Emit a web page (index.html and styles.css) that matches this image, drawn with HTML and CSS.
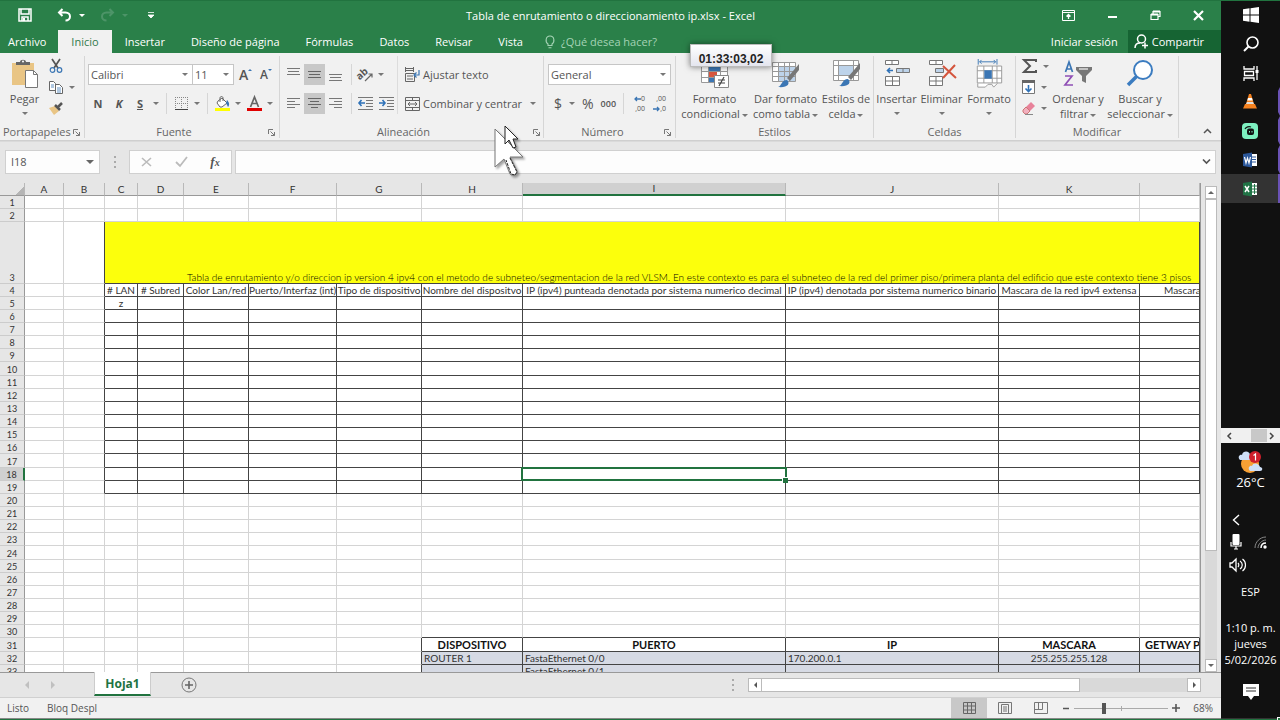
FILE: index.html
```html
<!DOCTYPE html>
<html lang="es">
<head>
<meta charset="utf-8">
<title>Tabla de enrutamiento o direccionamiento ip.xlsx - Excel</title>
<link rel="stylesheet" href="styles.css">
</head>
<body>
<div class="desktop">
<div class="app">
  <header class="titlebar">
    <div class="quick">
      <button aria-label="Guardar"><svg width="14" height="14" viewBox="0 0 14 14"><path d="M1 1h12v12H1z M3 1v5h8V1 M4 13V9h6v4" fill="none" stroke="#fff" stroke-width="1.5"/><path d="M5 10h2v3H5z" fill="#fff"/></svg></button>
      <button class="undo" aria-label="Deshacer"><svg width="15" height="14" viewBox="0 0 15 14"><path d="M5.500 1L2 4.500l3.500 3.500M2 4.500h6.500c6 0 6 8 0 8" fill="none" stroke="#fff" stroke-width="2"/></svg><i class="caret white"></i></button>
      <button class="redo" aria-label="Rehacer"><svg width="15" height="14" viewBox="0 0 15 14"><path d="M9.500 1L13 4.500 9.500 8M13 4.500H6.500c-6 0-6 8 0 8" fill="none" stroke="#4d9468" stroke-width="2"/></svg><i class="caret faded"></i></button>
      <button class="custom" aria-label="Personalizar"><svg width="6" height="6" viewBox="0 0 6 6"><path d="M0 .5h6M0 3h6L3 6z" stroke="#fff" stroke-width=".8" fill="#fff"/></svg></button>
    </div>
    <div class="doc-title">Tabla de enrutamiento o direccionamiento ip.xlsx - Excel</div>
    <div class="win-controls">
      <button aria-label="Opciones de la cinta"><svg width="13" height="11" viewBox="0 0 13 11"><path d="M.5.5h12v10H.5zM.5 2.500h12" fill="none" stroke="#fff"/><path d="M6.500 9V5M4.500 6.500l2-2 2 2" fill="none" stroke="#fff" stroke-width="1.300"/></svg></button>
      <button aria-label="Minimizar"><svg width="11" height="11" viewBox="0 0 11 11"><path d="M1 7h9" stroke="#fff" stroke-width="2"/></svg></button>
      <button aria-label="Restaurar"><svg width="11" height="11" viewBox="0 0 11 11"><path d="M1 4.500h7v5H1zM3 4V1.500h7v5H8" fill="none" stroke="#fff" stroke-width="1.200"/><path d="M1 4.500h7M3 1.500h7" stroke="#fff" stroke-width="2"/></svg></button>
      <button aria-label="Cerrar"><svg width="11" height="11" viewBox="0 0 11 11"><path d="M1 1l9 9M10 1l-9 9" stroke="#fff" stroke-width="2.200"/></svg></button>
    </div>
  </header>

  <nav class="tabs">
    <button class="file">Archivo</button>
    <button class="active">Inicio</button>
    <button>Insertar</button>
    <button>Diseño de página</button>
    <button>Fórmulas</button>
    <button>Datos</button>
    <button>Revisar</button>
    <button>Vista</button>
    <button class="tell"><svg width="10" height="14" viewBox="0 0 10 14"><path d="M3 10.500V9C0 7 .5 1 5 1s5 6 2 8v1.500zM3.500 12.800h3" fill="none" stroke="#a5d3b5" stroke-width="1.100"/></svg>¿Qué desea hacer?</button>
    <span class="grow"></span>
    <button class="signin">Iniciar sesión</button>
    <button class="share"><svg width="15" height="15" viewBox="0 0 15 15"><circle cx="7.500" cy="5" r="4" fill="none" stroke="#fff" stroke-width="1.500"/><path d="M1 14c0-4 3-5 5-5M8 11.500h6M11 8.500v6" fill="none" stroke="#fff" stroke-width="1.500"/></svg>Compartir</button>
  </nav>

  <section class="ribbon">
    <div class="group g-clip">
      <div class="body">
        <button class="big paste"><svg width="28" height="30" viewBox="0 0 28 30"><path d="M1 4h22v22H1z" fill="#e9c585"/><path d="M5 6V3h4c0-3 6-3 6 0h4v3z" fill="#666"/><circle cx="12" cy="2.500" r="1" fill="#fff"/><path d="M14.500 11.500h8l4 4v13h-12z" fill="#fff" stroke="#777"/><path d="M22.500 11.500v4h4" fill="none" stroke="#777"/></svg><span>Pegar</span><i class="caret"></i></button>
        <div class="stack">
          <button aria-label="Cortar"><svg width="14" height="14" viewBox="0 0 14 14"><path d="M3 0l6 9M11 0L5 9" stroke="#555" stroke-width="1.700"/><circle cx="3.500" cy="11" r="2.300" fill="none" stroke="#3b76b4" stroke-width="1.200"/><circle cx="10.500" cy="11" r="2.300" fill="none" stroke="#3b76b4" stroke-width="1.200"/></svg></button>
          <button aria-label="Copiar"><svg width="14" height="13" viewBox="0 0 14 13"><path d="M.5.5h4l2 2v7h-6zM6.500 3.500h4l3 3v6h-7z" fill="#fff" stroke="#666"/><path d="M2 4h3M2 6h3M8 7h4M8 9h4M8 11h4" stroke="#3b76b4" stroke-width=".8"/></svg><i class="caret"></i></button>
          <button aria-label="Copiar formato"><svg width="15" height="13" viewBox="0 0 15 13"><path d="M0 6l6-2 4 5-5 4z" fill="#e9c585"/><path d="M6 3l5 5M9 5l4-4" stroke="#555" stroke-width="2.500"/></svg></button>
        </div>
      </div>
      <footer>Portapapeles<svg class="launch" width="7" height="7" viewBox="0 0 7 7"><path d="M.5 5V.5H5M2.500 2.500l4 4M6.500 3v3.500H3" fill="none" stroke="#777"/></svg></footer>
    </div>

    <div class="group g-font">
      <div class="rows">
        <div class="row">
          <div class="combo c-font"><input aria-label="Fuente" value="Calibri"><i class="caret"></i></div>
          <div class="combo c-size"><input aria-label="Tamaño" value="11"><i class="caret"></i></div>
          <button class="grow-a" aria-label="Aumentar tamaño"><span class="ltr l14">A</span><i class="tip up"></i></button>
          <button class="grow-a" aria-label="Disminuir tamaño"><span class="ltr l12">A</span><i class="tip"></i></button>
        </div>
        <div class="row nks">
          <button class="nb">N</button><button class="ki">K</button><button class="su">S</button><i class="caret"></i>
          <i class="sep"></i>
          <button aria-label="Bordes"><svg width="13" height="13" viewBox="0 0 13 13"><path d="M.5 0v12M6.500 0v12M12.500 0v12M0 .5h13M0 6.500h13" stroke="#888" stroke-dasharray="1 1"/><path d="M0 12.500h13" stroke="#444"/></svg></button><i class="caret"></i>
          <i class="sep"></i>
          <button aria-label="Color de relleno"><svg width="15" height="15" viewBox="0 0 15 15"><path d="M3 5l4-3 5 5-5 4H5L2 7z" fill="#fff" stroke="#666"/><path d="M5 6V2c0-2 3-2 3 0v3" fill="none" stroke="#666"/><path d="M12 4c2 2 3 5 1 7l-2-4z" fill="#3b76b4"/><path d="M0 12h15v3H0z" fill="#ff0"/></svg></button><i class="caret"></i>
          <button aria-label="Color de fuente"><svg width="15" height="15" viewBox="0 0 15 15"><path d="M3.500 11L7.500 1l4 10M5 7.500h5" fill="none" stroke="#666" stroke-width="1.700"/><path d="M0 12h15v3H0z" fill="#e00000"/></svg></button><i class="caret"></i>
        </div>
      </div>
      <footer>Fuente<svg class="launch" width="7" height="7" viewBox="0 0 7 7"><path d="M.5 5V.5H5M2.500 2.500l4 4M6.500 3v3.500H3" fill="none" stroke="#777"/></svg></footer>
    </div>

    <div class="group g-align">
      <div class="align-body">
        <div class="rows left">
          <div class="row">
            <button class="tog" aria-label="Alinear arriba"><svg width="13" height="13" viewBox="0 0 13 13"><path d="M0 .5h13M1 3.500h11M0 6.500h13" stroke="#777"/></svg></button>
            <button class="tog on" aria-label="Alinear en el medio"><svg width="13" height="13" viewBox="0 0 13 13"><path d="M0 3.500h13M1 6.500h11M0 9.500h13" stroke="#666"/></svg></button>
            <button class="tog" aria-label="Alinear abajo"><svg width="13" height="13" viewBox="0 0 13 13"><path d="M0 6.500h13M1 9.500h11M0 12.500h13" stroke="#777"/></svg></button>
            <i class="sep"></i>
            <button class="orient" aria-label="Orientación"><svg width="16" height="14" viewBox="0 0 16 14"><g transform="rotate(-42 6 7)"><text x="-1" y="8" font-size="10" font-weight="700" fill="#555">ab</text></g><path d="M7 13l7-7M10.500 6H14v3.500" fill="none" stroke="#666" stroke-width="1.200"/></svg></button><i class="caret"></i>
          </div>
          <div class="row">
            <button class="tog" aria-label="Alinear a la izquierda"><svg width="13" height="12" viewBox="0 0 13 12"><path d="M0 .5h13M0 3.500h8M0 6.500h13M0 9.500h8" stroke="#777"/></svg></button>
            <button class="tog on" aria-label="Centrar"><svg width="13" height="12" viewBox="0 0 13 12"><path d="M0 .5h13M2 3.500h9M0 6.500h13M3 9.500h7" stroke="#666"/></svg></button>
            <button class="tog" aria-label="Alinear a la derecha"><svg width="13" height="12" viewBox="0 0 13 12"><path d="M0 .5h13M5 3.500h8M0 6.500h13M5 9.500h8" stroke="#777"/></svg></button>
            <i class="sep"></i>
            <button class="tog ind" aria-label="Disminuir sangría"><svg width="15" height="13" viewBox="0 0 15 13"><path d="M0 .5h15M8 3.500h7M8 6.500h7M8 9.500h7M0 12.500h15" stroke="#777"/><path d="M7 6H1M3.500 3L1 6l2.500 3" fill="none" stroke="#2f72b8" stroke-width="1.600"/></svg></button>
            <button class="tog ind" aria-label="Aumentar sangría"><svg width="15" height="13" viewBox="0 0 15 13"><path d="M0 .5h15M8 3.500h7M8 6.500h7M8 9.500h7M0 12.500h15" stroke="#777"/><path d="M0 6h6M3.500 3L6 6 3.500 9" fill="none" stroke="#2f72b8" stroke-width="1.600"/></svg></button>
          </div>
        </div>
        <div class="rows right">
          <div class="row"><button class="lbl"><svg width="15" height="15" viewBox="0 0 15 15"><path d="M.5 0v5M.5 1.500h8M.5 3.500h8M8.500 0v5M.5 6.500h9v8h-9zM2 9h6M2 12h6" fill="none" stroke="#666"/><path d="M14 3v5H9M11.500 5.500L9 8l2.500 2.500" fill="none" stroke="#3b76b4" stroke-width="1.200"/></svg>Ajustar texto</button></div>
          <div class="row"><button class="lbl"><svg width="15" height="14" viewBox="0 0 15 14"><path d="M.5.5h14v13H.5zM.5 3.500h14M.5 10.500h14M7.500 0v3M7.500 11v3M3 7h9M5 5L3 7l2 2M10 5l2 2-2 2" fill="none" stroke="#666"/></svg>Combinar y centrar</button><i class="caret far"></i></div>
        </div>
      </div>
      <footer>Alineación<svg class="launch" width="7" height="7" viewBox="0 0 7 7"><path d="M.5 5V.5H5M2.500 2.500l4 4M6.500 3v3.500H3" fill="none" stroke="#777"/></svg></footer>
    </div>

    <div class="group g-num">
      <div class="rows">
        <div class="row"><div class="combo c-num"><input aria-label="Formato de número" value="General"><i class="caret"></i></div></div>
        <div class="row nums">
          <button class="dollar">$</button><i class="caret"></i><button class="pct">%</button><button class="zeros">000</button>
          <i class="sep"></i>
          <button class="dec more" aria-label="Aumentar decimales"><span><svg width="7" height="6" viewBox="0 0 7 6"><path d="M7 3H1M3 1L1 3l2 2" fill="none" stroke="#3b76b4" stroke-width="1.300"/></svg>0</span><span>,00</span></button>
          <button class="dec" aria-label="Disminuir decimales"><span>,00</span><span><svg width="7" height="6" viewBox="0 0 7 6"><path d="M0 3h6M4 1l2 2-2 2" fill="none" stroke="#3b76b4" stroke-width="1.300"/></svg>,0</span></button>
        </div>
      </div>
      <footer>Número<svg class="launch" width="7" height="7" viewBox="0 0 7 7"><path d="M.5 5V.5H5M2.500 2.500l4 4M6.500 3v3.500H3" fill="none" stroke="#777"/></svg></footer>
    </div>

    <div class="group g-styles">
      <div class="body">
        <button class="big w70"><svg width="30" height="30" viewBox="0 0 30 30"><path d="M1.500 1.500h26v22h-26zM1.500 7.500h26M1.500 12.500h26M1.500 18.500h26M8.500 1.500v22M20.500 1.500v22" fill="#fff" stroke="#999"/><path d="M9 8h11v4H9z" fill="#3b76b4"/><path d="M9 13h8v5H9z" fill="#d9573f"/><path d="M9 19h6v4H9z" fill="#3b76b4"/><path d="M14.500 16.500h14v12h-14z" fill="#fff" stroke="#888"/><path d="M18 21h7M18 24h7M24 18l-5 9" stroke="#444" stroke-width="1.200"/></svg><span>Formato<br>condicional <i class="caret"></i></span></button>
        <button class="big w70"><svg width="30" height="30" viewBox="0 0 30 30"><path d="M1.500 3.500h23v19h-23z" fill="#fff" stroke="#999"/><path d="M8 8h16v14H8z" fill="#bdd3ea"/><path d="M1.500 7.500h23M1.500 12.500h23M1.500 17.500h23M7.500 3.500v19M13.500 3.500v19M18.500 3.500v19" stroke="#999"/><path d="M28 5v6l-9 11-3-3z" fill="#777"/><path d="M7 28c4-1 3-7 9-7 4 4 0 8-9 7z" fill="#3b76b4"/></svg><span>Dar formato<br>como tabla <i class="caret"></i></span></button>
        <button class="big w50"><svg width="30" height="30" viewBox="0 0 30 30"><path d="M2.500 1.500h25v20h-25zM2.500 6.500h25M2.500 16.500h25M7.500 1.500v20M22.500 1.500v20" fill="#fff" stroke="#999"/><path d="M8 7h14v9H8z" fill="#bdd3ea"/><path d="M29 4v6l-9 11-3-3z" fill="#777"/><path d="M8 27c4-1 3-7 9-7 4 4 0 8-9 7z" fill="#3b76b4"/></svg><span>Estilos de<br>celda <i class="caret"></i></span></button>
      </div>
      <footer>Estilos</footer>
    </div>

    <div class="group g-cells">
      <div class="body">
        <button class="big w44"><svg width="28" height="30" viewBox="0 0 28 30"><path d="M2.500 1.500h13v4h-13zM9 1.500v4M2.500 17.500h14v9h-14zM2.500 22h14M9.500 17.500v9" fill="#fff" stroke="#777"/><path d="M13.500 9.500h13v4h-13zM20 9.500v4" fill="#bdd3ea" stroke="#777"/><path d="M10 11.500H4M7 9l-2.500 2.500L7 14" fill="none" stroke="#2f72b8" stroke-width="1.600"/></svg><span>Insertar</span><i class="caret"></i></button>
        <button class="big w44"><svg width="30" height="30" viewBox="0 0 30 30"><path d="M2.500 1.500h13v4h-13zM9 1.500v4M2.500 17.500h13v9h-13zM2.500 22h13M9 17.500v9" fill="#fff" stroke="#777"/><path d="M8.500 9.500h8v4h-8z" fill="#bdd3ea" stroke="#777"/><path d="M16 7l13 12M28 6L16 19" stroke="#d4553d" stroke-width="2"/></svg><span>Eliminar</span><i class="caret"></i></button>
        <button class="big w50"><svg width="30" height="32" viewBox="0 0 30 32"><path d="M3.500 0v6M23.500 0v6M5 3h17M7 1L5 3l2 2M20 1l2 2-2 2" fill="none" stroke="#3b76b4"/><path d="M2.500 7.500h26v18h-26zM2.500 12.500h26M2.500 20.500h26M9.500 7.500v18M18.500 7.500v18M23.500 7.500v18M3 26v4h8l3-3h4l2 3 4-4" fill="#fff" stroke="#999"/><path d="M10 12h8v9h-8z" fill="#3b76b4"/></svg><span>Formato</span><i class="caret"></i></button>
      </div>
      <footer>Celdas</footer>
    </div>

    <div class="group g-edit">
      <div class="body">
        <div class="stack wide">
          <button aria-label="Autosuma"><svg width="15" height="14" viewBox="0 0 15 14"><path d="M14 3V1H2l6 6-6 6h12v-2" fill="none" stroke="#555" stroke-width="2"/></svg><i class="caret"></i></button>
          <button aria-label="Rellenar"><svg width="13" height="14" viewBox="0 0 13 14"><path d="M.5.5h12v13H.5z" fill="#fff" stroke="#777"/><path d="M0 0h13v3H0z" fill="#666"/><path d="M6.500 5v6M3.500 8.500l3 3 3-3" fill="none" stroke="#2f72b8" stroke-width="1.600"/></svg><i class="caret"></i></button>
          <button aria-label="Borrar"><svg width="13" height="13" viewBox="0 0 13 13"><path d="M4 5l5-5 4 4-5 5z" fill="#e8829a"/><path d="M4 5l4 4-3 3H3L1 10V8z" fill="#f2b0bf" stroke="#c77"/><path d="M3 12.500h8" stroke="#888"/></svg><i class="caret"></i></button>
        </div>
        <button class="big w60"><svg width="28" height="30" viewBox="0 0 28 30"><path d="M1.500 13L5 3l3.500 10M3 10h4" fill="none" stroke="#3b76b4" stroke-width="1.700"/><path d="M1 17h7L1 26h8" fill="none" stroke="#8f4fb5" stroke-width="1.700"/><path d="M12 8h16v3l-6 6v7l-4-2v-5l-6-6z" fill="#777"/><path d="M15 10h9" stroke="#ddd" stroke-width="1.500"/></svg><span>Ordenar y<br>filtrar <i class="caret"></i></span></button>
        <button class="big w66"><svg width="28" height="30" viewBox="0 0 28 30"><circle cx="17" cy="11" r="9" fill="#fff" stroke="#3b7cc0" stroke-width="2"/><path d="M10.500 17.500L2 26" stroke="#3b7cc0" stroke-width="3.500"/></svg><span>Buscar y<br>seleccionar <i class="caret"></i></span></button>
      </div>
      <footer>Modificar</footer>
    </div>
    <button class="collapse" aria-label="Contraer la cinta"><svg width="9" height="6" viewBox="0 0 9 6"><path d="M1 5l3.500-3.500L8 5" fill="none" stroke="#555" stroke-width="1.500"/></svg></button>
  </section>

  <section class="formula">
    <div class="combo name"><input aria-label="Cuadro de nombres" value="I18"><i class="caret dd"></i></div>
    <i class="dots"></i>
    <div class="fx-box">
      <button aria-label="Cancelar"><svg width="11" height="10" viewBox="0 0 11 10"><path d="M1 1l9 8M10 1L1 9" stroke="#bbb" stroke-width="1.600"/></svg></button>
      <button aria-label="Introducir"><svg width="13" height="11" viewBox="0 0 13 11"><path d="M1 6l4 4 7-9" fill="none" stroke="#bbb" stroke-width="1.800"/></svg></button>
      <button class="fx" aria-label="Insertar función">f<sub>x</sub></button>
    </div>
    <div class="combo bar"><input aria-label="Barra de fórmulas"><svg width="9" height="7" viewBox="0 0 9 7"><path d="M1 1.500L4.500 5 8 1.500" fill="none" stroke="#555" stroke-width="1.700"/></svg></div>
  </section>

  <main class="sheet">
    <div class="grid-clip">
      <table class="grid">
        <colgroup><col class="k-n"><col class="k-a"><col class="k-b"><col class="k-c"><col class="k-d"><col class="k-e"><col class="k-f"><col class="k-g"><col class="k-h"><col class="k-i"><col class="k-j"><col class="k-k"><col></colgroup>
        <thead><tr><th class="corner"></th><th>A</th><th>B</th><th>C</th><th>D</th><th>E</th><th>F</th><th>G</th><th>H</th><th class="sel">I</th><th>J</th><th>K</th><th></th></tr></thead>
        <tbody id="top"></tbody>
        <tbody id="cells"></tbody>
      </table>
    </div>
    <div class="vscroll"><button aria-label="Subir"><i class="tri up"></i></button><div class="thumb"></div><div class="track"></div><button aria-label="Bajar"><i class="tri"></i></button></div>
  </main>

  <div class="sheetbar">
    <div class="nav"><i class="side l"></i><i class="side r"></i></div>
    <button class="sheet-tab">Hoja1</button>
    <button class="add" aria-label="Hoja nueva"><svg width="16" height="16" viewBox="0 0 16 16"><circle cx="8" cy="8" r="7" fill="none" stroke="#777"/><path d="M4 8h8M8 4v8" stroke="#666" stroke-width="1.600"/></svg></button>
    <span class="grow"></span>
    <i class="dots"></i>
    <div class="hscroll"><button aria-label="Izquierda"><i class="side dark l"></i></button><div class="thumb"></div><div class="track"></div><button aria-label="Derecha"><i class="side dark r"></i></button></div>
  </div>

  <footer class="status">
    <span>Listo</span><span class="lock">Bloq Despl</span><span class="grow"></span>
    <button class="view on" aria-label="Normal"><svg width="13" height="12" viewBox="0 0 13 12"><path d="M.5.5h12v11H.5zM.5 4h12M.5 8h12M4.500.5v11M8.500.5v11" fill="none" stroke="#666"/></svg></button>
    <button class="view" aria-label="Diseño de página"><svg width="14" height="12" viewBox="0 0 14 12"><path d="M.5.5h13v11H.5zM3.500 2.500h7v9h-7zM5 5h4M5 7h4M5 9h4" fill="none" stroke="#777"/></svg></button>
    <button class="view" aria-label="Salto de página"><svg width="14" height="12" viewBox="0 0 14 12"><path d="M.5.5h13v11H.5zM.5 7.500h8v-7M4.500.5v7" fill="none" stroke="#777"/></svg></button>
    <button class="zoom" aria-label="Alejar"><svg width="7" height="7" viewBox="0 0 7 7"><path d="M0 3.500h6" stroke="#555" stroke-width="1.500"/></svg></button>
    <input class="slider" type="range" min="0" max="100" value="31" aria-label="Zoom">
    <button class="zoom" aria-label="Acercar"><svg width="8" height="8" viewBox="0 0 8 8"><path d="M0 4h8M4 0v8" stroke="#555" stroke-width="1.600"/></svg></button>
    <span class="percent">68%</span>
  </footer>
</div>

<aside class="taskbar">
  <button aria-label="Inicio"><svg width="16" height="16" viewBox="0 0 16 16"><path d="M0 2.300l6.500-1v6.200H0zM7.500 1.200L16 0v7.500H7.500zM0 8.500h6.500v6.200l-6.500-1zM7.500 8.500H16V16l-8.500-1.200z" fill="#fff"/></svg></button>
  <button aria-label="Buscar"><svg width="16" height="16" viewBox="0 0 16 16"><circle cx="9.500" cy="6.500" r="5.500" fill="none" stroke="#fff" stroke-width="1.600"/><path d="M5.500 10.500L1 15" stroke="#fff" stroke-width="2"/></svg></button>
  <button aria-label="Vista de tareas"><svg width="16" height="16" viewBox="0 0 16 16"><path d="M1 1v3h10V1M1.500 6.500h9v4h-9zM1 16v-3h10v3M14 1v14" fill="none" stroke="#fff" stroke-width="1.300"/><path d="M12.500 5h3v3h-3z" fill="#fff"/></svg></button>
  <button class="open" aria-label="VLC"><svg width="14" height="15" viewBox="0 0 14 15"><path d="M6 0h2l3 10H3z" fill="#f58220"/><path d="M5 4h4l.7 2.500H4.300z" fill="#fff"/><path d="M2 10h10l2 4.500H0z" fill="#f58220"/><path d="M3 10h8l-1-2H4z" fill="#ddd"/></svg></button>
  <button class="open" aria-label="Grabadora"><svg width="16" height="16" viewBox="0 0 16 16"><rect width="16" height="16" rx="4" fill="#7df0c0"/><path d="M3 6c1-2 4-3 6-2" fill="none" stroke="#111" stroke-width="1.200"/><rect x="5" y="5.500" width="7" height="6.500" rx="2" fill="#111"/><path d="M7.500 8v1.500M10 8v1.500" stroke="#7df0c0"/></svg></button>
  <button class="open" aria-label="Word"><svg width="16" height="16" viewBox="0 0 16 16"><path d="M8 2h7v12H8z" fill="#fff"/><path d="M10 5h4M10 7.500h4M10 10h4" stroke="#2b579a"/><path d="M1 2l9-1.500v15L1 14z" fill="#2b579a"/><path d="M2.500 5L4 11l1.500-5L7 11l1.500-6" fill="none" stroke="#fff" stroke-width="1.200"/></svg></button>
  <button class="open current" aria-label="Excel"><svg width="16" height="16" viewBox="0 0 16 16"><path d="M8 2h7v12H8z" fill="#fff"/><path d="M10 5h5M10 8h5M10 11h5M12.500 3v10" stroke="#217346"/><path d="M1 2l9-1.500v15L1 14z" fill="#217346"/><path d="M3 5l4 6M7 5l-4 6" stroke="#fff" stroke-width="1.500"/></svg></button>
  <div class="mini"><svg width="6" height="8" viewBox="0 0 6 8"><path d="M5 1L2 4l3 3" fill="none" stroke="#444" stroke-width="1.500"/></svg><i></i><svg width="6" height="8" viewBox="0 0 6 8"><path d="M1 1l3 3-3 3" fill="none" stroke="#444" stroke-width="1.500"/></svg></div>
  <div class="weather"><svg width="26" height="23" viewBox="0 0 26 23"><circle cx="12" cy="13" r="9" fill="#f7a034"/><path d="M2 9c-3-3 0-6 2-5 1-5 8-4 8 0 3 0 3 5 0 5z" fill="#cfe0f7"/><path d="M12 20c-3-3 0-6 2-5 1-4 7-3 8 1 3 0 3 4 0 4z" fill="#cfe0f7"/><circle cx="17" cy="6" r="6" fill="#d01f2c"/><path d="M15.500 4.500L17.500 3v6.500" fill="none" stroke="#fff" stroke-width="1.200"/></svg><span>26°C</span></div>
  <div class="tray">
    <svg width="8" height="12" viewBox="0 0 8 12"><path d="M7 1L1.500 6 7 11" fill="none" stroke="#fff" stroke-width="1.400"/></svg>
    <div class="pair"><svg width="12" height="16" viewBox="0 0 12 16"><rect x="2.500" width="7" height="11" rx="1" fill="#fff"/><path d="M1 8v4h10V8M6 12v3M4 15h4" fill="none" stroke="#fff" stroke-width="1.200"/></svg><svg width="13" height="13" viewBox="0 0 13 13"><path d="M1 12C1 6 6 1 12 1M4 12c0-4 4-8 8-8" fill="none" stroke="#888"/><path d="M7 12c0-3 2-5 5-5" fill="none" stroke="#fff" stroke-width="1.500"/><circle cx="11" cy="11" r="1.700" fill="#fff"/></svg></div>
    <svg width="17" height="14" viewBox="0 0 17 14"><path d="M1 5h2l4-4v12L3 9H1z" fill="none" stroke="#fff" stroke-width="1.300"/><path d="M9 5c1 1 1 3 0 4M11 3c3 2 3 6 0 8M13.500 1c4 3 4 9 0 12" fill="none" stroke="#fff" stroke-width="1.200"/></svg>
  </div>
  <div class="lang">ESP</div>
  <div class="clock">1:10 p. m.<br>jueves<br>5/02/2026</div>
  <button class="notify" aria-label="Notificaciones"><svg width="16" height="16" viewBox="0 0 16 16"><path d="M0 0h16v12h-5l-3 4-3-4H0z" fill="#fff"/><path d="M3 4h10M3 7h10" stroke="#333"/></svg></button>
</aside>

<div class="timer">01:33:03,02</div>
<svg class="pointer" width="32" height="54" viewBox="0 0 32 54"><path d="M1 4v38l9-8 6 15c3 3 8 0 7-3l-7-14h13z" fill="#fff" stroke="#777"/><path d="M16 33l7 14-2 3-4-1-5-14" fill="none" stroke="#222" stroke-dasharray="3 1"/><path d="M11 1v18l4-4 4 8 3-1-3-8h5z" fill="#fff" stroke="#222"/></svg>
</div>
<script src="app.js"></script>
</body>
</html>
```

FILE: styles.css
```css
* { box-sizing: border-box; }
body { margin: 0; background: #111; font: 11px/15px "Open Sans", "Noto Sans", sans-serif; color: #555; }
button { border: 0; padding: 0; margin: 0; background: none; font: inherit; color: inherit; white-space: nowrap; }
input { font: inherit; color: inherit; border: 0; margin: 0; padding: 0; background: transparent; min-width: 0; outline: 0; }
svg { display: block; flex: none; overflow: visible; }
i { font-style: normal; }
.grow { flex: 1; }
.desktop { position: relative; display: flex; height: 100vh; overflow: hidden; }
.app { flex: 1; min-width: 0; display: flex; flex-direction: column; background: #e6e6e6; border-bottom: 2px solid #888; }

.caret { display: inline-block; flex: none; width: 0; height: 0; border: 3px solid transparent; border-top-color: #777; border-bottom: 0; vertical-align: middle; }
.caret.white { border-top-color: #fff; }
.caret.faded { border-top-color: #4d9468; }

.titlebar { height: 30px; flex: none; background: #2a8049; color: #fff; display: grid; grid-template-columns: 1fr auto 1fr; align-items: center; }
.quick, .quick button, .win-controls { display: flex; align-items: center; }
.quick { padding-left: 18px; }
.quick button { height: 28px; }
.undo, .redo { gap: 7px; }
.undo { margin-left: 25px; }
.redo { margin-left: 15px; }
.custom { margin-left: 20px; }
.doc-title { font-size: 11px; }
.win-controls { justify-content: flex-end; gap: 32px; padding-right: 17px; }

.tabs { height: 23px; flex: none; background: #2a8049; color: #fff; display: flex; }
.tabs button { padding: 0 13px; }
.tabs .file { padding: 0 12px 0 8px; }
.tabs .active { background: #f1f1f1; color: #2f7a4c; }
.tabs .tell { display: flex; align-items: center; gap: 6px; padding-left: 9px; color: #a5d3b5; }
.tabs .share { display: flex; align-items: center; gap: 3px; background: #166433; padding: 0 17px 0 6px; }
.tabs .signin { padding: 0 10px; }

.ribbon { height: 88px; flex: none; background: #f1f1f1; border-bottom: 1px solid #cfcfcf; display: flex; padding: 3px 0 2px; }
.group { flex: none; display: flex; flex-direction: column; border-right: 1px solid #d6d6d6; }
.group footer { position: relative; margin-top: auto; text-align: center; height: 15px; line-height: 15px; margin-bottom: -1px; color: #666; }
.launch { position: absolute; right: 4px; top: 5px; }
.g-clip { width: 85px; }
.g-clip footer { text-align: left; padding-left: 3px; }
.g-font { width: 195px; }
.g-align { width: 264px; padding-right: 16px; }
.g-align .launch { right: -13px; }
.g-num { width: 132px; }
.g-num footer { padding-right: 14px; }
.g-font footer { padding-right: 16px; }
.g-styles { width: 198px; }
.g-cells { width: 142px; }
.g-edit { width: 163px; }
.body { display: flex; padding-top: 3px; }
.big { display: flex; flex-direction: column; align-items: center; text-align: center; }
.big svg { height: 30px; }
.big span { display: block; margin-top: 2px; line-height: 15px; }
.big > .caret { margin-top: 6px; }
.big span .caret { margin-left: -1px; }
.paste { width: 49px; }
.w70 { width: 71px; } .w50 { width: 50px; } .w44 { width: 45px; } .w60 { width: 60px; } .w66 { width: 64px; }
.g-styles .body { padding-left: 3px; }
.stack { display: flex; flex-direction: column; gap: 7px; }
.stack button { display: flex; align-items: center; gap: 6px; height: 14px; }
.stack.wide { width: 32px; padding-left: 6px; }
.collapse { margin: auto 9px 4px auto; }

.rows { display: flex; flex-direction: column; gap: 8px; padding-top: 8px; }
.row { display: flex; align-items: center; height: 21px; }
.combo { display: flex; align-items: center; background: #fff; border: 1px solid #c6c6c6; height: 21px; padding: 0 4px 0 2px; }
.combo input { flex: 1; width: 20px; color: #555; }
.g-font .row { padding-left: 3px; }
.c-font { width: 105px; }
.c-size { width: 41px; border-left: 0; }
.grow-a { display: flex; align-items: center; width: 21px; padding-left: 5px; font-weight: 600; }
.l14 { font-size: 14px; }
.l12 { font-size: 12px; }
.tip { align-self: flex-start; border: 2px solid transparent; border-top-color: #3b76b4; border-bottom: 0; margin-top: 2px; }
.tip.up { border: 2px solid transparent; border-bottom-color: #3b76b4; border-top: 0; }
.nks .caret { margin-left: 5px; }
.nks > button { width: 16px; margin-left: 5px; }
.nks .nb { margin-left: 2px; }
.nks svg { margin: auto; }
.nks .sep { margin: 0 1px 0 7px; }
.nb { font-weight: 700; }
.ki { font-weight: 700; font-style: italic; }
.su { font-weight: 700; text-decoration: underline; }
.sep { width: 1px; height: 21px; background: #d6d6d6; flex: none; }
.align-body { display: flex; }
.left { width: 120px; border-right: 1px solid #dcdcdc; padding-left: 3px; }
.tog { width: 21px; height: 21px; display: flex; align-items: center; justify-content: center; }
.tog.on { background: #c8c8c8; }
.left .sep { margin: 0 3px 0 5px; }
.orient { margin: 0 4px 0 3px; }
.right { padding-left: 7px; }
.lbl { display: flex; align-items: center; gap: 3px; }
.far { margin-left: 8px; }
.g-num .row { padding-left: 4px; }
.c-num { width: 123px; }
.nums { gap: 7px; }
.nums button { flex: none; }
.dollar { font-size: 14px; padding-left: 6px; }
.pct { font-size: 14px; }
.zeros { font-size: 9px; font-weight: 600; }
.dec { font-size: 7px; line-height: 10px; width: 14px; }
.dec span { display: flex; align-items: center; justify-content: flex-end; }

.formula { height: 42px; flex: none; display: flex; align-items: center; padding: 0 5px 2px; border-top: 1px solid #dadada; }
.formula .combo, .fx-box { height: 24px; background: #fdfdfd; border: 1px solid #d0d0d0; }
.name { width: 95px; }
.formula .name { padding: 0 5px; }
.caret.dd { border-width: 4px 4px 0; border-top-color: #666; }
.dots { width: 2px; height: 12px; flex: none; background: repeating-linear-gradient(#aaa 0 2px, transparent 2px 5px); margin: 0 14px; }
.formula .dots { margin-right: 13px; }
.fx-box { display: flex; align-items: center; justify-content: space-around; width: 103px; margin-right: 3px; }
.fx { font: italic 700 13px/15px "Liberation Serif", serif; }
.fx sub { font-size: 10px; line-height: 8px; vertical-align: baseline; }
.bar { flex: 1; }

.sheet { flex: 1; min-height: 0; display: flex; }
.grid-clip { flex: 1; min-width: 0; overflow: hidden; border-right: 1px solid #999; }
.grid { width: 100%; min-width: 1200px; table-layout: fixed; border-collapse: separate; border-spacing: 0; font: 400 10px/11px Lato, "Open Sans", sans-serif; color: #333; background: #fff; }
.k-n { width: 25px; } .k-a { width: 39px; } .k-b { width: 41px; } .k-c { width: 33px; } .k-d { width: 46px; } .k-e { width: 65px; }
.k-f { width: 88px; } .k-g { width: 85px; } .k-h { width: 101px; } .k-i { width: 263px; } .k-j { width: 213px; } .k-k { width: 141px; }
.grid th, .grid td { padding: 0; height: 13px; border: solid #d4d4d4; border-width: 0 1px 1px 0; white-space: nowrap; overflow: hidden; }
.grid th { background: #e6e6e6; font-weight: 400; border-color: #b8b8b8; }
.grid thead th { border-bottom-color: #999; }
.grid thead th.sel { background: #d0d0d0; border-bottom: 2px solid #21733f; }
.corner { background: linear-gradient(135deg, #e6e6e6 75%, #b5b5b5 75%) !important; }
.grid tbody th { font-size: 9px; border-right-color: #999; border-bottom-color: #ccc; vertical-align: bottom; }
.grid tbody th.sel { background: #d0d0d0; border-right: 2px solid #21733f; }
#cells tr:nth-child(7n) > * { height: 14px; }
.grid td.box { border-color: #444; }
.grid td.edge { border-right-color: #444; }
.grid td.under { border-bottom-color: #444; }
.grid td.c { text-align: center; }
.grid td.indent { padding-left: 24px; }
.grid td.lead { padding-left: 2px; }
.grid td.b { font-weight: 700; font-size: 11px; color: #111; }
.grid td.gate { padding-left: 5px; }
.grid td.blue { background: #d6dae4; }
.grid td.banner { height: 62px; background: #fcff0c; vertical-align: bottom; padding-left: 82px; border-color: #444; font-weight: 300; color: #000; }
.grid td.active { position: relative; overflow: visible; }
.active::before { content: ""; position: absolute; inset: -1px; border: 2px solid #21733f; left: -2px; right: -2px; }
.active::after { content: ""; position: absolute; right: -3px; bottom: -3px; width: 5px; height: 5px; background: #21733f; border: solid #fff; border-width: 1px 0 0 1px; }
.vscroll { width: 20px; display: flex; flex-direction: column; padding: 3px 4px 0; }
.vscroll button, .hscroll button { background: #fff; border: 1px solid #bbb; display: grid; place-items: center; }
.vscroll button { height: 13px; }
.thumb { background: #fff; border: 1px solid #bbb; }
.track { background: #d9d9d9; }
.vscroll .thumb { flex: 352; }
.vscroll .track { flex: 108; }
.tri { border: 3px solid transparent; border-top-color: #666; border-bottom: 0; }
.tri.up { border: 3px solid transparent; border-bottom-color: #666; border-top: 0; }

.sheetbar { height: 26px; flex: none; display: flex; align-items: center; border-top: 1px solid #999; border-bottom: 1px solid #d0d0d0; padding-right: 20px; }
.nav { width: 94px; padding-left: 25px; display: flex; gap: 22px; }
.side { border: 4px solid transparent; border-left-color: #c0c0c0; border-right: 0; }
.side.l { border: 4px solid transparent; border-right-color: #c0c0c0; border-left: 0; }
.side.dark { border-width: 3px 0 3px 3px; border-left-color: #555; }
.side.dark.l { border-width: 3px 3px 3px 0; border-right-color: #555; }
.sheet-tab { align-self: stretch; margin: -1px 0 1px; width: 57px; background: #fff; border: 1px solid #ccc; border-width: 0 1px 2px; border-bottom-color: #21733f; color: #21733f; font-size: 12px; font-weight: 700; }
.add { margin-left: 30px; }
.hscroll { display: flex; height: 14px; flex: 0 0 453px; }
.hscroll button { width: 14px; }
.hscroll .thumb { flex: 318; border-left: 0; }
.hscroll .track { flex: 107; }

.status { height: 20px; flex: none; background: #f1f1f1; display: flex; align-items: center; padding: 0 8px 0 7px; font-size: 10px; }
.lock { margin-left: 18px; }
.view { width: 36px; height: 20px; display: grid; place-items: center; }
.view.on { background: #c8c8c8; }
.zoom { margin: 0 4px; }
.slider { appearance: none; width: 94px; height: 12px; background: linear-gradient(#aaa, #aaa) 50% / 100% 1px no-repeat, linear-gradient(#aaa, #aaa) 50% / 1px 5px no-repeat; }
.slider::-webkit-slider-thumb { appearance: none; width: 4px; height: 11px; background: #555; }
.percent { margin-left: 9px; }

.taskbar { width: 59px; flex: none; background: #111; color: #fff; display: flex; flex-direction: column; font-size: 11px; line-height: 16px; text-align: center; border-bottom: 2px solid #333; }
.taskbar > button { display: grid; place-items: center; height: 29px; flex: none; }
.taskbar > .open { border-right: 2px solid #6a52b5; border-bottom: 4px solid #111; border-top: 4px solid #111; }
.taskbar > .current { background: #333; border-top: 0; border-bottom: 0; }
.mini { margin-top: auto; height: 15px; flex: none; background: #f0f0f0; display: flex; align-items: center; justify-content: space-between; padding: 0 5px; }
.mini i { width: 16px; height: 13px; background: #c8c8c8; margin-left: 16px; }
.weather { padding: 8px 0 0; font-size: 13px; line-height: 17px; }
.weather svg { margin: 0 auto; }
.tray { display: flex; flex-direction: column; gap: 8px; padding: 23px 0 0 8px; }
.tray > svg { margin-left: 3px; }
.pair { display: flex; align-items: center; gap: 12px; padding-left: 1px; }
.tray > svg:last-child { margin-left: 0; }
.lang { padding-top: 12px; }
.clock { padding-top: 20px; }
.taskbar > .notify { height: 48px; margin-bottom: 2px; }

.timer { position: absolute; left: 690px; top: 44px; width: 82px; height: 23px; background: linear-gradient(#fff, #e4e5ee); box-shadow: 0 0 6px rgba(0,0,0,.5); border: 1px solid #bbb; color: #222; font: 700 12px/28px "Liberation Sans", sans-serif; text-align: center; }
.pointer { position: absolute; left: 494px; top: 125px; filter: drop-shadow(2px 2px 1px rgba(0,0,0,.35)); }
```

FILE: app.js
```js
const COLS = "ABCDEFGHIJKL".split("");

const DATA = {
  C4: ["# LAN", "c"], D4: ["# Subred", "c"], E4: ["Color Lan/red", "c"],
  F4: ["Puerto/Interfaz (int)", "c"], G4: ["Tipo de dispositivo", "c"],
  H4: ["Nombre del dispositvo", "c"],
  I4: ["IP (ipv4) punteada denotada por sistema numerico decimal", "c"],
  J4: ["IP (ipv4) denotada por sistema numerico binario", "c"],
  K4: ["Mascara de la red ipv4 extensa", "c"], L4: ["Mascara", "indent"],
  C5: ["z", "c"],
  H31: ["DISPOSITIVO", "c b"], I31: ["PUERTO", "c b"], J31: ["IP", "c b"],
  K31: ["MASCARA", "c b"], L31: ["GETWAY P", "b gate"],
  H32: ["ROUTER 1", "lead"], I32: ["FastaEthernet 0/0", "lead"],
  J32: ["170.200.0.1", "lead"], K32: ["255.255.255.128", "c"],
  I33: ["FastaEthernet 0/1", "lead"],
  I18: ["", "active"]
};

const BANNER = "Tabla de enrutamiento y/o direccion ip version 4 ipv4 con el metodo de subneteo/segmentacion de la red VLSM. En este contexto es para el subneteo de la red del primer piso/primera planta del edificio que este contexto tiene 3 pisos";

function cell(col, row) {
  const [text, extra] = DATA[col + row] || ["", ""];
  const names = extra ? [extra] : [];
  if (row >= 4 && row <= 19) {
    if (col >= "C") names.push("box");
    if (col === "B") names.push("edge");
  }
  if (row >= 31) {
    if (col >= "H") names.push("box");
    if (col === "G") names.push("edge");
    if (col >= "H" && row > 31) names.push("blue");
  }
  if (row === 30 && col >= "H") names.push("under");
  return `<td class="${names.join(" ")}">${text}</td>`;
}

function line(row) {
  const head = `<th${row === 18 ? ' class="sel"' : ""}>${row}</th>`;
  if (row === 3) {
    return `<tr>${head}<td></td><td class="edge"></td><td class="banner" colspan="10">${BANNER}</td></tr>`;
  }
  return `<tr>${head}${COLS.map(c => cell(c, row)).join("")}</tr>`;
}

function fill(id, from, to) {
  let html = "";
  for (let r = from; r <= to; r++) html += line(r);
  document.getElementById(id).innerHTML = html;
}

fill("top", 1, 3);
fill("cells", 4, 33);
```
